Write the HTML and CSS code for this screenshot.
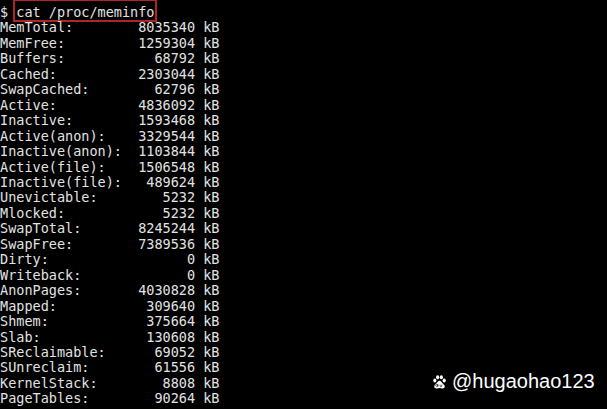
FILE: index.html
```html
<!DOCTYPE html>
<html lang="en">
<head>
<meta charset="utf-8">
<title>cat /proc/meminfo</title>
<link rel="stylesheet" href="styles.css">
</head>
<body>
<main class="term">
  <div class="prompt">$ <span class="hl">cat /proc/meminfo</span></div>
  <div class="table">
    <div class="row"><span>MemTotal:</span><span class="n">8035340</span><span class="u">kB</span></div>
    <div class="row"><span>MemFree:</span><span class="n">1259304</span><span class="u">kB</span></div>
    <div class="row"><span>Buffers:</span><span class="n">68792</span><span class="u">kB</span></div>
    <div class="row"><span>Cached:</span><span class="n">2303044</span><span class="u">kB</span></div>
    <div class="row"><span>SwapCached:</span><span class="n">62796</span><span class="u">kB</span></div>
    <div class="row"><span>Active:</span><span class="n">4836092</span><span class="u">kB</span></div>
    <div class="row"><span>Inactive:</span><span class="n">1593468</span><span class="u">kB</span></div>
    <div class="row"><span>Active(anon):</span><span class="n">3329544</span><span class="u">kB</span></div>
    <div class="row"><span>Inactive(anon):</span><span class="n">1103844</span><span class="u">kB</span></div>
    <div class="row"><span>Active(file):</span><span class="n">1506548</span><span class="u">kB</span></div>
    <div class="row"><span>Inactive(file):</span><span class="n">489624</span><span class="u">kB</span></div>
    <div class="row"><span>Unevictable:</span><span class="n">5232</span><span class="u">kB</span></div>
    <div class="row"><span>Mlocked:</span><span class="n">5232</span><span class="u">kB</span></div>
    <div class="row"><span>SwapTotal:</span><span class="n">8245244</span><span class="u">kB</span></div>
    <div class="row"><span>SwapFree:</span><span class="n">7389536</span><span class="u">kB</span></div>
    <div class="row"><span>Dirty:</span><span class="n">0</span><span class="u">kB</span></div>
    <div class="row"><span>Writeback:</span><span class="n">0</span><span class="u">kB</span></div>
    <div class="row"><span>AnonPages:</span><span class="n">4030828</span><span class="u">kB</span></div>
    <div class="row"><span>Mapped:</span><span class="n">309640</span><span class="u">kB</span></div>
    <div class="row"><span>Shmem:</span><span class="n">375664</span><span class="u">kB</span></div>
    <div class="row"><span>Slab:</span><span class="n">130608</span><span class="u">kB</span></div>
    <div class="row"><span>SReclaimable:</span><span class="n">69052</span><span class="u">kB</span></div>
    <div class="row"><span>SUnreclaim:</span><span class="n">61556</span><span class="u">kB</span></div>
    <div class="row"><span>KernelStack:</span><span class="n">8808</span><span class="u">kB</span></div>
    <div class="row"><span>PageTables:</span><span class="n">90264</span><span class="u">kB</span></div>
  </div>
</main>
<div class="mark">
  <svg class="paw" viewBox="0 0 16 16" width="15" height="15" aria-hidden="true">
    <ellipse cx="3" cy="7" rx="1.7" ry="2.1" fill="#fff"/>
    <ellipse cx="6" cy="3.4" rx="1.7" ry="2.2" fill="#fff"/>
    <ellipse cx="10" cy="3.4" rx="1.7" ry="2.2" fill="#fff"/>
    <ellipse cx="13" cy="7" rx="1.7" ry="2.1" fill="#fff"/>
    <path d="M8 7.2c-1.6 0-2.4 1.6-3.4 2.8-1 1.1-2.4 1.9-2.2 3.6.2 1.4 1.5 1.9 2.6 1.8 1.1-.1 2-.5 3-.5s1.9.4 3 .5c1.1.1 2.4-.4 2.6-1.8.2-1.7-1.2-2.5-2.2-3.6C10.4 8.8 9.6 7.2 8 7.2z" fill="#fff"/>
    <path d="M6.2 10.6v3M6.2 12.3a1.1 1.1 0 1 0 0 .01M8.6 11.3v1.4a.9.9 0 0 0 1.8 0v-1.4" stroke="#000" stroke-width=".7" fill="none"/>
  </svg>
  <span class="handle">@hugaohao123</span>
</div>
</body>
</html>
```

FILE: styles.css
```css
html, body {
  margin: 0;
  padding: 0;
  background: #000;
}
body {
  width: 607px;
  height: 409px;
  overflow: hidden;
  position: relative;
}
.term {
  font-family: "DejaVu Sans Mono", monospace;
  font-size: 13.5px;
  line-height: 15.46px;
  color: #e2e2e2;
  padding: 5px 0 0 0;
}
.prompt {
  white-space: pre;
}
.hl {
  border: 2px solid #b02429;
  padding: 3px 1px 0 1px;
  margin: 0 -3px;
}
.row {
  display: grid;
  grid-template-columns: 16ch 8ch auto;
  white-space: pre;
}
.n {
  text-align: right;
}
.u {
  padding-left: 1ch;
}
.mark {
  position: absolute;
  left: 432px;
  top: 370px;
  display: flex;
  align-items: center;
  gap: 5px;
  color: #fff;
  font-family: "Liberation Sans", Arial, sans-serif;
  font-size: 20px;
}
.paw {
  display: block;
}
```
